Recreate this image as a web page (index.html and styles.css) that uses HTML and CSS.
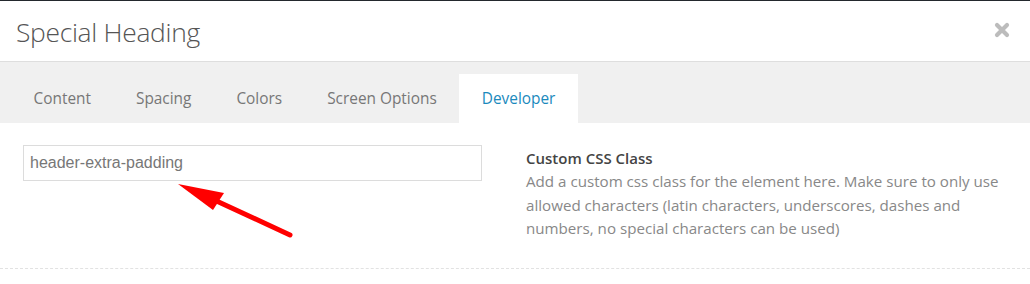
FILE: index.html
```html
<!DOCTYPE html>
<html lang="en">
<head>
    <meta charset="UTF-8">
    <title>Special Heading</title>
    <link rel="stylesheet" href="styles.css">
</head>
<body>
    <div class="modal">
        <div class="modal-header">
            <div class="modal-title">Special Heading</div>
            <a href="#" class="modal-close">
                <svg width="16" height="16" viewBox="0 0 16 16">
                    <path d="M3 3 L13 13 M13 3 L3 13" stroke="#bcbcbc" stroke-width="4.2" stroke-linecap="round"/>
                </svg>
            </a>
        </div>

        <ul class="tabs">
            <li class="tab">Content</li>
            <li class="tab">Spacing</li>
            <li class="tab">Colors</li>
            <li class="tab">Screen Options</li>
            <li class="tab active">Developer</li>
        </ul>

        <div class="option">
            <div class="option-field">
                <input type="text" class="text-input" value="header-extra-padding">
            </div>
            <div class="option-info">
                <div class="option-label">Custom CSS Class</div>
                <div class="option-desc">Add a custom css class for the element here. Make sure to only use allowed characters (latin characters, underscores, dashes and numbers, no special characters can be used)</div>
            </div>

            <!-- annotation arrow drawn over the form -->
            <svg class="arrow" width="140" height="70" viewBox="0 0 140 70">
                <path d="M120 55 L40 18" stroke="#ff0000" stroke-width="5" stroke-linecap="round"/>
                <polygon points="8,4 54,13 43,30" fill="#ff0000"/>
            </svg>
        </div>
    </div>
</body>
</html>
```

FILE: styles.css
```css
* {
    margin: 0;
    padding: 0;
    box-sizing: border-box;
}

body {
    width: 1030px;
    height: 284px;
    overflow: hidden;
    background: #fff;
    font-family: 'Open Sans', sans-serif;
}

.modal {
    border-top: 1px solid #23282d;
}

.modal-header {
    height: 61px;
    display: flex;
    justify-content: space-between;
    align-items: center;
    padding: 0 20px 0 16px;
    border-bottom: 1px solid #dedede;
}

.modal-title {
    font-size: 26.4px;
    font-weight: 300;
    color: #555;
    letter-spacing: -0.3px;
    margin-top: 2px;
}

.modal-close {
    display: flex;
    margin-top: -2px;
}

.tabs {
    list-style: none;
    display: flex;
    background: #f0f0f0;
    padding: 12px 0 0 11px;
    height: 61px;
}

.tab {
    padding: 1px 22.5px 0;
    line-height: 48px;
    font-size: 15.4px;
    color: #777;
}

.tab.active {
    background: #fff;
    color: #1b8abd;
}

.option {
    position: relative;
    display: grid;
    grid-template-columns: 459px 1fr;
    column-gap: 44px;
    padding: 22px 23px 0;
    height: 146px;
    border-bottom: 1px dashed #e2e2e2;
}

.text-input {
    width: 100%;
    height: 36px;
    border: 1px solid #dcdcdc;
    padding: 0 6px;
    font-family: 'Liberation Sans', Arial, sans-serif;
    font-size: 16px;
    color: #777;
    outline: none;
}

.option-info {
    padding-top: 2px;
}

.option-label {
    font-size: 15px;
    font-weight: 600;
    color: #444;
    line-height: 23px;
}

.option-desc {
    font-size: 15.15px;
    color: #888;
    line-height: 23.5px;
}

.arrow {
    position: absolute;
    left: 170px;
    top: 57px;
}
```
